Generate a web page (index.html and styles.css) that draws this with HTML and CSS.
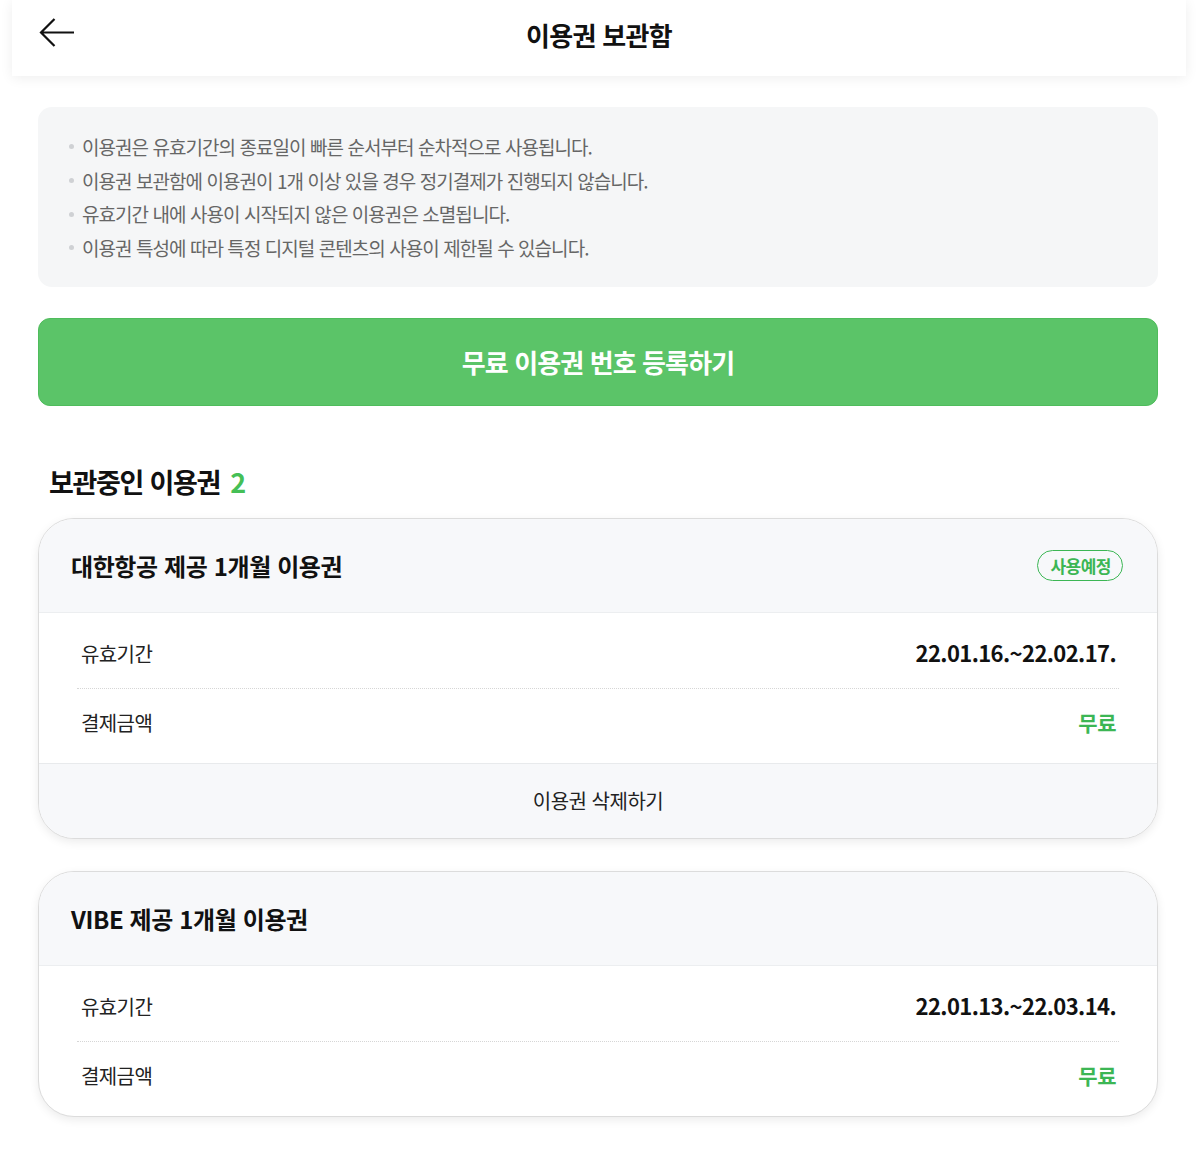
FILE: index.html
```html
<!DOCTYPE html>
<html lang="ko">
<head>
<meta charset="utf-8">
<title>이용권 보관함</title>
<link rel="stylesheet" href="styles.css">
</head>
<body>
<header class="topbar">
  <button class="back" aria-label="뒤로">
    <svg width="36" height="30" viewBox="0 0 36 30"><path d="M2 14.5 H35 M15.5 1 L2 14.5 L15.5 28" fill="none" stroke="#111" stroke-width="2.2" stroke-linejoin="miter"/></svg>
  </button>
  <h1 class="title">이용권 보관함</h1>
</header>

<main class="content">
  <ul class="notice">
    <li>이용권은 유효기간의 종료일이 빠른 순서부터 순차적으로 사용됩니다.</li>
    <li>이용권 보관함에 이용권이 1개 이상 있을 경우 정기결제가 진행되지 않습니다.</li>
    <li>유효기간 내에 사용이 시작되지 않은 이용권은 소멸됩니다.</li>
    <li>이용권 특성에 따라 특정 디지털 콘텐츠의 사용이 제한될 수 있습니다.</li>
  </ul>

  <button class="register">무료 이용권 번호 등록하기</button>

  <h2 class="section-title">보관중인 이용권 <span class="count">2</span></h2>

  <section class="card">
    <div class="card-head">
      <span class="card-title">대한항공 제공 1개월 이용권</span>
      <span class="badge">사용예정</span>
    </div>
    <div class="rows">
      <div class="row"><span class="label">유효기간</span><span class="value">22.01.16.~22.02.17.</span></div>
      <div class="row"><span class="label">결제금액</span><span class="value free">무료</span></div>
    </div>
    <div class="card-foot">이용권 삭제하기</div>
  </section>

  <section class="card">
    <div class="card-head">
      <span class="card-title">VIBE 제공 1개월 이용권</span>
    </div>
    <div class="rows">
      <div class="row"><span class="label">유효기간</span><span class="value">22.01.13.~22.03.14.</span></div>
      <div class="row"><span class="label">결제금액</span><span class="value free">무료</span></div>
    </div>
  </section>
</main>
</body>
</html>
```

FILE: styles.css
```css
* { box-sizing: border-box; }
html, body { margin: 0; padding: 0; background: #fff; }
body {
  font-family: "Noto Sans CJK KR", "Noto Sans", sans-serif;
  color: #111;
  width: 1200px;
}

.topbar {
  height: 76px;
  margin: 0 14px 0 12px;
  background: #fff;
  box-shadow: 0 2px 12px rgba(0,0,0,0.07);
  display: flex;
  align-items: center;
  justify-content: center;
  position: relative;
}
.back {
  position: absolute;
  left: 27px;
  top: 18px;
  border: 0;
  background: none;
  padding: 0;
  width: 36px;
  height: 30px;
  display: flex;
}
.title {
  margin: -7px 0 0;
  font-size: 26px;
  font-weight: 700;
  letter-spacing: -0.7px;
  line-height: 1;
  color: #111;
}

.content {
  padding: 31px 42px 40px 38px;
  display: flex;
  flex-direction: column;
}

.notice {
  list-style: none;
  margin: 0;
  background: #f5f6f7;
  border-radius: 14px;
  padding: 23px 20px 22px 31px;
}
.notice li {
  display: flex;
  align-items: center;
  gap: 8px;
  font-size: 19px;
  letter-spacing: -0.95px;
  line-height: 33.7px;
  color: #666;
}
.notice li::before {
  content: "";
  width: 5px;
  height: 5px;
  border-radius: 50%;
  background: #cfd1d4;
  flex: none;
}

.register {
  margin-top: 31px;
  height: 88px;
  border: 1px solid #4fbc5c;
  border-radius: 12px;
  background: #5bc468;
  color: #fff;
  font-family: inherit;
  font-size: 26px;
  font-weight: 700;
  letter-spacing: -0.9px;
  cursor: pointer;
}

.section-title {
  margin: 59px 0 19px 11px;
  font-size: 27px;
  font-weight: 700;
  letter-spacing: -1.3px;
  line-height: 34px;
  color: #111;
}
.count { color: #45bf56; margin-left: 4px; }

.card {
  border: 1px solid #dcdcdc;
  border-radius: 36px;
  overflow: hidden;
  box-shadow: 0 3px 10px rgba(0,0,0,0.08);
  background: #fff;
  margin-bottom: 32px;
}
.card-head {
  height: 94px;
  background: #f7f8fa;
  border-bottom: 1px solid #eceef0;
  display: flex;
  align-items: center;
  justify-content: space-between;
  padding: 0 34px 0 32px;
}
.card-title {
  font-size: 24px;
  font-weight: 700;
  letter-spacing: -0.4px;
  color: #111;
}
.badge {
  height: 31px;
  padding: 0 11px 0 12px;
  border: 1.5px solid #3cb654;
  border-radius: 16px;
  color: #3cb654;
  font-size: 17px;
  font-weight: 700;
  letter-spacing: -0.5px;
  display: flex;
  align-items: center;
}

.rows {
  margin: 0 38px;
  padding: 7px 0;
}
.row {
  height: 68px;
  display: flex;
  align-items: center;
  justify-content: space-between;
  padding: 0 3px 0 4px;
}
.row + .row { border-top: 1px dotted #d6d6d6; }
.label {
  font-size: 20px;
  letter-spacing: -0.6px;
  color: #222;
}
.value {
  font-size: 22px;
  font-weight: 700;
  letter-spacing: -0.6px;
  color: #111;
  margin-top: -3px;
}
.value.free { color: #3cb654; font-size: 21px; letter-spacing: -0.5px; margin-top: -1px; }

.card-foot {
  height: 75px;
  background: #f7f8fa;
  border-top: 1px solid #e8eaec;
  display: flex;
  align-items: center;
  justify-content: center;
  font-size: 20px;
  letter-spacing: -0.5px;
  color: #222;
}
```
